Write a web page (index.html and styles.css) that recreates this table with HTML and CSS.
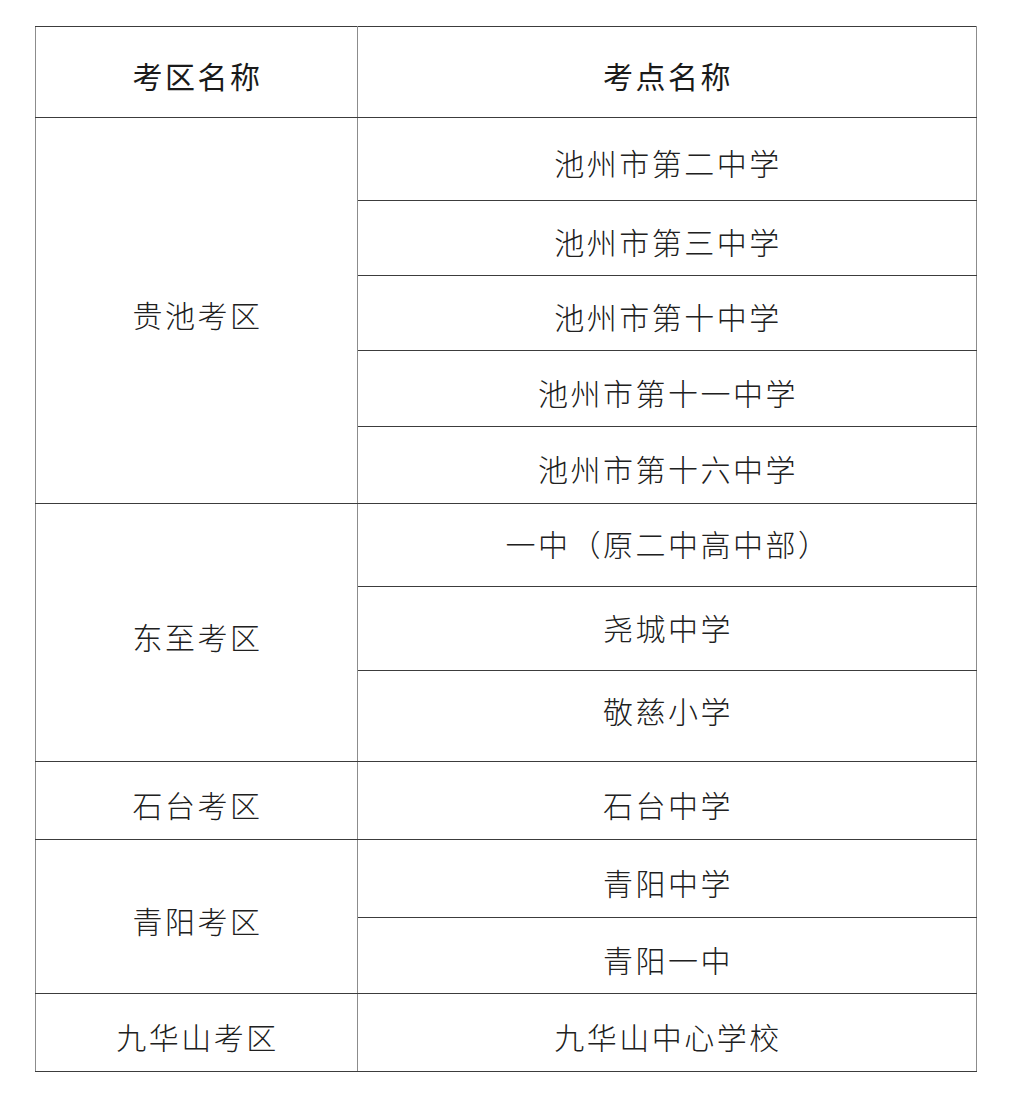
FILE: index.html
```html
<!DOCTYPE html>
<html lang="zh-CN">
<head>
<meta charset="utf-8">
<title>考区考点</title>
<link rel="stylesheet" href="styles.css">
</head>
<body>
<table class="sites">
  <colgroup><col class="c1"><col class="c2"></colgroup>
  <thead>
    <tr class="h91"><th>考区名称</th><th>考点名称</th></tr>
  </thead>
  <tbody>
    <tr class="h83"><td rowspan="5">贵池考区</td><td>池州市第二中学</td></tr>
    <tr class="h75"><td>池州市第三中学</td></tr>
    <tr class="h75"><td>池州市第十中学</td></tr>
    <tr class="h76"><td>池州市第十一中学</td></tr>
    <tr class="h77"><td>池州市第十六中学</td></tr>
    <tr class="h83"><td rowspan="3">东至考区</td><td class="up">一中（原二中高中部）</td></tr>
    <tr class="h84"><td class="up">尧城中学</td></tr>
    <tr class="h91"><td class="up2">敬慈小学</td></tr>
    <tr class="h78"><td>石台考区</td><td>石台中学</td></tr>
    <tr class="h78"><td rowspan="2">青阳考区</td><td>青阳中学</td></tr>
    <tr class="h76"><td>青阳一中</td></tr>
    <tr class="h78"><td>九华山考区</td><td>九华山中心学校</td></tr>
  </tbody>
</table>
</body>
</html>
```

FILE: styles.css
```css
html, body {
  margin: 0;
  padding: 0;
  background: #ffffff;
}

body {
  padding: 26px 0 0 35px;
}

.sites {
  border-collapse: collapse;
  width: 941px;
  table-layout: fixed;
  color: #1e1e1e;
  font-family: "Noto Sans CJK SC", "Noto Sans", sans-serif;
}

.c1 { width: 322px; }
.c2 { width: 619px; }

.sites th,
.sites td {
  padding: 6px 0 0 2px;
  text-align: center;
  vertical-align: middle;
  font-size: 30px;
  line-height: 36px;
  letter-spacing: 2.5px;
  white-space: nowrap;
  border-top: 1px solid #3c3c3c;
  border-bottom: 1px solid #3c3c3c;
  border-left: 1px solid #8c8c8c;
  border-right: 1px solid #8c8c8c;
}

.sites th {
  font-weight: 400;
  color: #1a1a1a;
}

.sites td {
  font-weight: 300;
  color: #202020;
}

.sites td.up { padding-top: 0; padding-bottom: 4px; }
.sites td.up2 { padding-top: 0; padding-bottom: 12px; }

.h91 { height: 91px; }
.h83 { height: 83px; }
.h84 { height: 84px; }
.h75 { height: 75px; }
.h76 { height: 76px; }
.h77 { height: 77px; }
.h78 { height: 78px; }
```
